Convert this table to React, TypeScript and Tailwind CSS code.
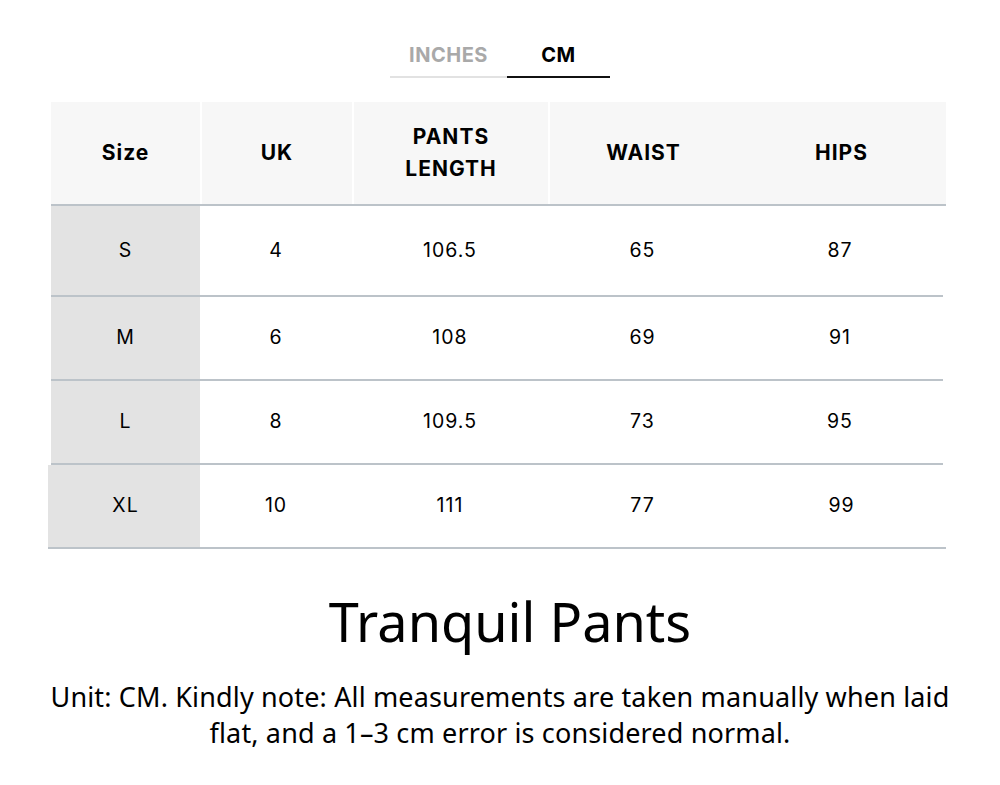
import React from "react";

const rows = [
  { s: "S", uk: "4", pl: "106.5", w: "65", h: "87", ht: "h-[91px]" },
  { s: "M", uk: "6", pl: "108", w: "69", h: "91", ht: "h-[84px]" },
  { s: "L", uk: "8", pl: "109.5", w: "73", h: "95", ht: "h-[84px]" },
  { s: "XL", uk: "10", pl: "111", w: "77", h: "99", ht: "h-[84px]" },
];

export default function App() {
  return (
    <div className="w-[1000px] h-[785px] bg-white flex flex-col items-center">
      <div className="mt-[38px] flex">
        <div className="w-[117px] h-[40px] flex items-start justify-center pt-[2px] border-b-2 border-[#e2e2e2] font-['Inter',sans-serif] font-bold text-[20px] tracking-[0.5px] text-[#a9a9a9]">
          INCHES
        </div>
        <div className="w-[103px] h-[40px] flex items-start justify-center pt-[2px] border-b-2 border-[#111] font-['Inter',sans-serif] font-bold text-[20px] tracking-[0.5px] text-black">
          CM
        </div>
      </div>
      <div className="mt-[24px] self-start ml-[51px] w-[895px] font-['Inter',sans-serif] text-black">
        <div className="flex h-[104px] border-b-2 border-[#bcc3c9] bg-white font-bold text-[21px] tracking-[1px]">
          <div className="w-[149px] bg-[#f7f7f7] flex items-center justify-center">Size</div>
          <div className="w-[2px] bg-white" />
          <div className="w-[150px] bg-[#f7f7f7] flex items-center justify-center">UK</div>
          <div className="w-[2px] bg-white" />
          <div className="w-[194px] bg-[#f7f7f7] flex items-center justify-center text-center leading-[32px]">PANTS<br />LENGTH</div>
          <div className="w-[2px] bg-white" />
          <div className="flex-1 bg-[#f7f7f7] flex">
            <div className="w-[187px] flex items-center justify-center">WAIST</div>
            <div className="flex-1 flex items-center justify-center">HIPS</div>
          </div>
        </div>
        {rows.map((r, i) => (
          <div
            key={r.s}
            className={`flex ${r.ht} border-b-2 border-[#bcc3c9] text-[19.5px] tracking-[1px] ${i === rows.length - 1 ? "-ml-[3px]" : "mr-[3px]"}`}
          >
            <div className={`${i === rows.length - 1 ? "w-[152px] pl-[3px]" : "w-[149px]"} bg-[#e3e3e3] flex items-center justify-center`}>{r.s}</div>
            <div className="w-[152px] flex items-center justify-center">{r.uk}</div>
            <div className="w-[196px] flex items-center justify-center">{r.pl}</div>
            <div className="w-[189px] flex items-center justify-center">{r.w}</div>
            <div className="flex-1 flex items-center justify-center">{r.h}</div>
          </div>
        ))}
      </div>
      <div className="mt-[40px] pl-[20px] font-['Noto_Sans',sans-serif] text-[54px] leading-[64px] text-black">
        Tranquil Pants
      </div>
      <div className="mt-[26px] w-[920px] text-center font-['Noto_Sans',sans-serif] text-[27px] tracking-[0.15px] leading-[36px] text-black">
        Unit: CM. Kindly note: All measurements are taken manually when laid flat, and a 1–3 cm error is considered normal.
      </div>
    </div>
  );
}
